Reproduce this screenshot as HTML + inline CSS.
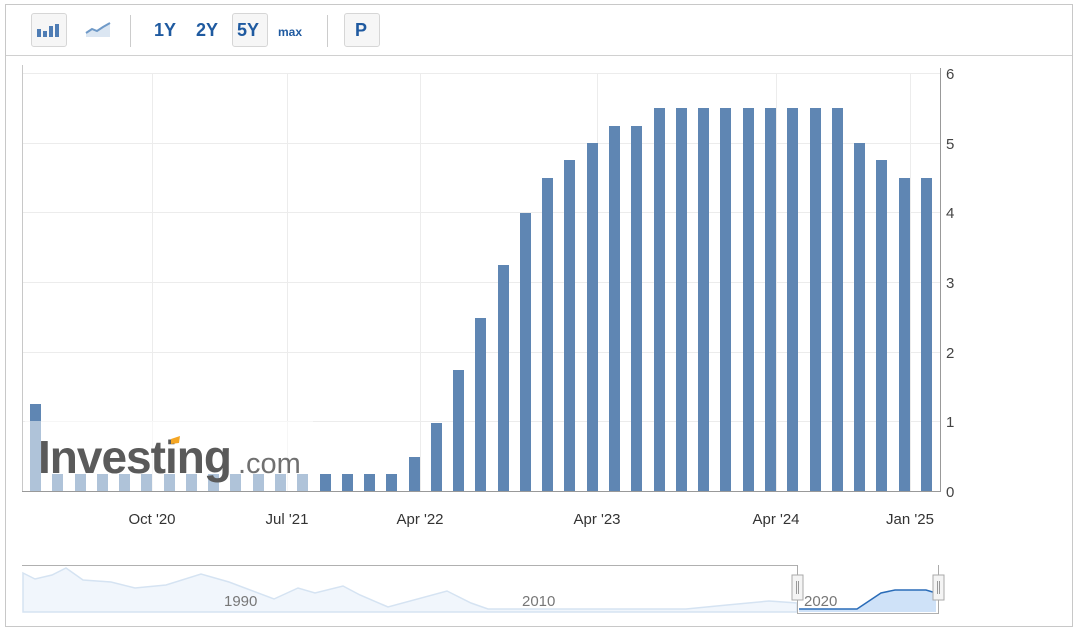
<!DOCTYPE html>
<html><head><meta charset="utf-8"><style>
body{margin:0;background:#fff;width:1080px;height:635px;overflow:hidden;font-family:"Liberation Sans",Arial,sans-serif}
.frame{position:absolute;left:5px;top:4px;width:1068px;height:623px;border:1px solid #c8c8c8;box-sizing:border-box}
.tb{position:absolute;left:0;top:0;width:100%;height:50px;border-bottom:1px solid #d0d0d0}
.btn{position:absolute;top:8px;height:34px;border:1px solid #d6d6d6;border-radius:3px;background:#f6f6f6;box-sizing:border-box}
.t{position:absolute;top:15px;font-weight:bold;color:#1f5aa0;font-size:18px}
.sep{position:absolute;top:10px;width:1px;height:32px;background:#ccc}
</style></head><body>
<div class="frame">
<div class="tb">
 <div class="btn" style="left:25px;width:36px"></div>
 <svg style="position:absolute;left:30px;top:14px" width="28" height="22"><rect x="1" y="10" width="4" height="8" fill="#4f7db5"/><rect x="7" y="12" width="4" height="6" fill="#4f7db5"/><rect x="13" y="7" width="4" height="11" fill="#4f7db5"/><rect x="19" y="5" width="4" height="13" fill="#4f7db5"/></svg>
 <svg style="position:absolute;left:78px;top:14px" width="30" height="24"><path d="M2 14 L8 10 L13 12 L19 8 L26 4 L26 18 L2 18Z" fill="#dbe6f2"/><path d="M2 14 L8 10 L13 12 L19 8 L26 4" stroke="#6f9ac8" stroke-width="2" fill="none"/></svg>
 <div class="sep" style="left:124px"></div>
 <div class="t" style="left:148px">1Y</div>
 <div class="t" style="left:190px">2Y</div>
 <div class="btn" style="left:226px;width:36px"></div>
 <div class="t" style="left:231px">5Y</div>
 <div class="t" style="left:272px;font-size:12px;top:20px">max</div>
 <div class="sep" style="left:321px"></div>
 <div class="btn" style="left:338px;width:36px"></div>
 <div class="t" style="left:349px">P</div>
</div>
</div>
<svg style="position:absolute;left:0;top:0" width="1080" height="635">
<g stroke="#ececec" stroke-width="1">
<line x1="22" x2="940" y1="73.5" y2="73.5"/><line x1="22" x2="940" y1="143.5" y2="143.5"/><line x1="22" x2="940" y1="212.5" y2="212.5"/><line x1="22" x2="940" y1="282.5" y2="282.5"/><line x1="22" x2="940" y1="352.5" y2="352.5"/><line x1="22" x2="940" y1="421.5" y2="421.5"/>
<line x1="152.5" x2="152.5" y1="73" y2="491"/><line x1="287.5" x2="287.5" y1="73" y2="491"/><line x1="420.5" x2="420.5" y1="73" y2="491"/><line x1="597.5" x2="597.5" y1="73" y2="491"/><line x1="776.5" x2="776.5" y1="73" y2="491"/><line x1="910.5" x2="910.5" y1="73" y2="491"/>
</g>
<line x1="22.5" x2="22.5" y1="65" y2="492" stroke="#c8c8c8"/>
<line x1="940.5" x2="940.5" y1="68" y2="492" stroke="#999"/>
<line x1="22" x2="941" y1="491.5" y2="491.5" stroke="#999"/>
<g fill="#5f86b3">
<rect x="30" y="404" width="11" height="87"/>
<rect x="52" y="474" width="11" height="17"/><rect x="75" y="474" width="11" height="17"/><rect x="97" y="474" width="11" height="17"/><rect x="119" y="474" width="11" height="17"/><rect x="141" y="474" width="11" height="17"/><rect x="164" y="474" width="11" height="17"/><rect x="186" y="474" width="11" height="17"/><rect x="208" y="474" width="11" height="17"/><rect x="230" y="474" width="11" height="17"/><rect x="253" y="474" width="11" height="17"/><rect x="275" y="474" width="11" height="17"/><rect x="297" y="474" width="11" height="17"/>
<rect x="320" y="474" width="11" height="17"/><rect x="342" y="474" width="11" height="17"/><rect x="364" y="474" width="11" height="17"/><rect x="386" y="474" width="11" height="17"/>
<rect x="409" y="457" width="11" height="34"/><rect x="431" y="423" width="11" height="68"/><rect x="453" y="370" width="11" height="121"/><rect x="475" y="318" width="11" height="173"/><rect x="498" y="265" width="11" height="226"/><rect x="520" y="213" width="11" height="278"/><rect x="542" y="178" width="11" height="313"/><rect x="564" y="160" width="11" height="331"/><rect x="587" y="143" width="11" height="348"/><rect x="609" y="126" width="11" height="365"/><rect x="631" y="126" width="11" height="365"/>
<rect x="654" y="108" width="11" height="383"/><rect x="676" y="108" width="11" height="383"/><rect x="698" y="108" width="11" height="383"/><rect x="720" y="108" width="11" height="383"/><rect x="743" y="108" width="11" height="383"/><rect x="765" y="108" width="11" height="383"/><rect x="787" y="108" width="11" height="383"/><rect x="810" y="108" width="11" height="383"/><rect x="832" y="108" width="11" height="383"/>
<rect x="854" y="143" width="11" height="348"/><rect x="876" y="160" width="11" height="331"/><rect x="899" y="178" width="11" height="313"/><rect x="921" y="178" width="11" height="313"/>
</g>
<rect x="25" y="421" width="288" height="70" fill="#fff" opacity="0.5"/>
<text x="38" y="473" font-size="46" font-weight="bold" fill="#5a5a5a" letter-spacing="-1" font-family="Liberation Sans">Investing</text>
<text x="238" y="473" font-size="29" fill="#707070" font-family="Liberation Sans">.com</text>
<path d="M171 439 L180 436 L179 443 L171 444Z" fill="#f5a623"/>
<g font-size="15" fill="#444" font-family="Liberation Sans">
<text x="946" y="79">6</text><text x="946" y="149">5</text><text x="946" y="218">4</text><text x="946" y="288">3</text><text x="946" y="358">2</text><text x="946" y="427">1</text><text x="946" y="497">0</text>
</g>
<g font-size="15" fill="#333" text-anchor="middle" font-family="Liberation Sans">
<text x="152" y="524">Oct '20</text><text x="287" y="524">Jul '21</text><text x="420" y="524">Apr '22</text><text x="597" y="524">Apr '23</text><text x="776" y="524">Apr '24</text><text x="910" y="524">Jan '25</text>
</g>
<!-- navigator -->
<line x1="22" x2="797" y1="565.5" y2="565.5" stroke="#b0b0b0"/>
<line x1="797" x2="938" y1="613.5" y2="613.5" stroke="#b0b0b0"/>
<path d="M23 573 L35 579 L52 575 L66 568 L83 580 L111 582 L135 588 L166 585 L201 574 L229 582 L274 599 L298 588 L315 593 L343 586 L360 595 L388 607 L447 591 L471 603 L488 609 L686 609 L727 605 L769 601 L797 603 L797 612 L23 612Z" fill="#f1f6fc" stroke="#d5e3f2" stroke-width="1.5"/>
<path d="M799 609 L857 609 L881 593 L895 590 L926 590 L936 593 L936 612 L799 612Z" fill="#cfe2f8"/>
<path d="M799 609 L857 609 L881 593 L895 590 L926 590 L936 593" stroke="#2a6cb8" stroke-width="1.5" fill="none"/>
<line x1="797.5" x2="797.5" y1="565" y2="614" stroke="#aaa"/>
<line x1="938.5" x2="938.5" y1="565" y2="614" stroke="#aaa"/>
<rect x="792" y="575" width="11" height="25" fill="#f4f4f4" stroke="#aaa"/>
<rect x="933" y="575" width="11" height="25" fill="#f4f4f4" stroke="#aaa"/>
<g stroke="#999"><line x1="796.5" x2="796.5" y1="581" y2="594"/><line x1="798.5" x2="798.5" y1="581" y2="594"/><line x1="937.5" x2="937.5" y1="581" y2="594"/><line x1="939.5" x2="939.5" y1="581" y2="594"/></g>
<g font-size="15" fill="#777" font-family="Liberation Sans"><text x="224" y="606">1990</text><text x="522" y="606">2010</text><text x="804" y="606">2020</text></g>
</svg>
</body></html>
